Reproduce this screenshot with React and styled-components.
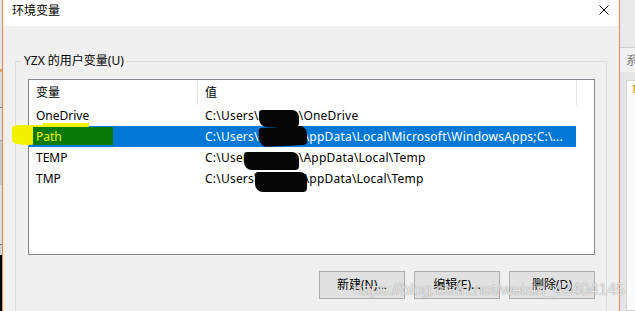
import React from 'react';
import styled, { createGlobalStyle } from 'styled-components';

const GlobalStyle = createGlobalStyle`
  html, body { margin: 0; padding: 0; background: #f0f0f0; overflow: hidden; }
  body {
    font-family: "Noto Sans", "Noto Sans CJK SC", sans-serif;
    font-size: 12px;
    color: #000;
  }
  * { box-sizing: border-box; }
`;

const Screen = styled.div`
  position: relative;
  display: flex;
  width: 635px;
  height: 311px;
  overflow: hidden;
`;

const LeftEdge = styled.div`
  width: 2px;
  flex: none;
  background: linear-gradient(
    to bottom,
    #e6e6e6 0, #e6e6e6 69px,
    #f0a060 69px, #f0a060 72px,
    #dedede 72px, #d8d8d8 107px,
    #8a8a8a 107px, #8a8a8a 108px,
    #e0e0e0 108px, #e0e0e0 140px,
    #9a9a9a 140px, #9a9a9a 141px,
    #c8c8c8 141px, #c8c8c8 185px,
    #e0e0e0 185px, #e0e0e0 244px,
    #777 244px, #777 245px,
    #d0d0d0 245px, #d0d0d0 255px,
    #000 255px
  );
`;

const Dialog = styled.div`
  width: 618px;
  flex: none;
  display: flex;
  flex-direction: column;
  border-left: 1px solid #ef8366;
  border-right: 1px solid #ef8366;
  background: #f0f0f0;
`;

const TitleBar = styled.div`
  height: 26px;
  flex: none;
  background: #fff;
  display: flex;
  justify-content: space-between;
  align-items: flex-start;
  padding: 0 10px 0 9px;
`;

const Title = styled.div`
  line-height: 22px;
  font-size: 12px;
`;

const CloseBox = styled.div`
  margin-top: 5px;
  width: 10px;
  height: 10px;
  display: flex;
`;

const Body = styled.div`
  flex: 1;
  min-height: 0;
  padding: 28px 12px 0;
`;

const GroupBox = styled.fieldset`
  margin: 0;
  padding: 0;
  border: 1px solid #dcdcdc;
  min-width: 0;
`;

const Legend = styled.legend`
  margin-left: 6px;
  padding: 0 2px;
  line-height: 14px;
  font-size: 12px;
`;

const GroupContent = styled.div`
  padding: 11px 11px 12px 12px;
`;

const ListView = styled.div`
  width: 567px;
  height: 176px;
  border: 1px solid #828790;
  background: #fff;
`;

const HeaderRow = styled.div`
  display: flex;
  height: 25px;
`;

const HeaderCell = styled.div`
  width: ${p => p.$w}px;
  flex: none;
  padding-left: 7px;
  line-height: 25px;
  border-right: 1px solid #e5e5e5;
`;

const Row = styled.div`
  display: flex;
  width: 547px;
  height: 21px;
  line-height: 21px;
  white-space: nowrap;
  background: ${p => (p.$selected ? '#0078d7' : 'transparent')};
  color: ${p => (p.$selected ? '#fff' : '#000')};
`;

const NameCell = styled.div`
  width: 169px;
  flex: none;
  padding-left: 7px;
`;

const ValueCell = styled.div`
  width: 378px;
  flex: none;
  padding-left: 7px;
  letter-spacing: 0.22px;
`;

const MarkedName = styled.span`
  position: relative;
  z-index: 2;
  color: #f2f200;
`;

const Redact = styled.span`
  display: inline-block;
  vertical-align: top;
  position: relative;
  z-index: 2;
  width: ${p => p.$w}px;
  height: ${p => p.$h}px;
  margin-left: ${p => p.$ml || 0}px;
  margin-right: ${p => p.$mr || 0}px;
  background: #050505;
  border-radius: 3px 7px 4px 8px;
  transform: translateY(${p => p.$dy || 0}px) rotate(${p => p.$rot || 0}deg);
`;

const ButtonRow = styled.div`
  display: flex;
  justify-content: flex-end;
  gap: 9px;
  margin-top: 16px;
`;

const Button = styled.button`
  width: 86px;
  height: 28px;
  padding: 0;
  border: 1px solid #adadad;
  background: #e1e1e1;
  font-family: "Noto Sans", "Noto Sans CJK SC", sans-serif;
  font-size: 12px;
  line-height: 26px;
  color: #000;
`;

const SideWindow = styled.div`
  flex: 1;
  display: flex;
  flex-direction: column;
  background: #f0f0f0;
  overflow: hidden;
  min-width: 0;
`;

const SideTop = styled.div`
  height: 48px;
  flex: none;
  background: #e9e9e9;
  border-bottom: 1px solid #cfcfcf;
`;

const SideLabel = styled.div`
  height: 24px;
  flex: none;
  padding: 2px 0 0 6px;
  line-height: 22px;
  color: #7a7a7a;
  white-space: nowrap;
  overflow: hidden;
`;

const SidePanel = styled.div`
  flex: 1;
  background: #e6e6e6;
  padding: 8px 0 0 6px;
`;

const SideBox = styled.div`
  height: 100%;
  background: #fbfbfb;
  border: 1px solid #d2d2d2;
  border-right: none;
  padding: 4px 0 0 6px;
`;

const SideIcon = styled.div`
  width: 8px;
  height: 8px;
  background: #f2c14e;
  border-top: 2px solid #d99a1e;
`;

const Annotation = styled.svg`
  position: absolute;
  left: 0;
  top: 118px;
  z-index: 1;
`;

const Watermark = styled.div`
  position: absolute;
  left: 353px;
  top: 280px;
  z-index: 3;
  font-family: "Liberation Sans", Arial, sans-serif;
  font-size: 16px;
  line-height: 20px;
  color: rgba(255, 255, 255, 0.78);
  text-shadow: 0 0 1px rgba(110, 110, 110, 0.9);
  white-space: nowrap;
`;

export default function App() {
  return (
    <>
      <GlobalStyle />
      <Screen>
        <LeftEdge />
        <Dialog>
          <TitleBar>
            <Title>环境变量</Title>
            <CloseBox>
              <svg width="10" height="10" viewBox="0 0 10 10">
                <path d="M0.5 0.5 L9.5 9.5 M9.5 0.5 L0.5 9.5" stroke="#000" strokeWidth="1" fill="none" />
              </svg>
            </CloseBox>
          </TitleBar>
          <Body>
            <GroupBox>
              <Legend>YZX 的用户变量(U)</Legend>
              <GroupContent>
                <ListView>
                  <HeaderRow>
                    <HeaderCell $w={169}>变量</HeaderCell>
                    <HeaderCell $w={379}>值</HeaderCell>
                  </HeaderRow>
                  <Row>
                    <NameCell>OneDrive</NameCell>
                    <ValueCell>
                      C:\Users\<Redact $w={40} $h={17} $dy={5} />\OneDrive
                    </ValueCell>
                  </Row>
                  <Row $selected>
                    <NameCell><MarkedName>Path</MarkedName></NameCell>
                    <ValueCell>
                      C:\Users\<Redact $w={48} $h={19} $dy={1} $mr={-10} $rot={-3} />\AppData\Local\Microsoft\WindowsApps;C:\...
                    </ValueCell>
                  </Row>
                  <Row>
                    <NameCell>TEMP</NameCell>
                    <ValueCell>
                      C:\Users\<Redact $w={55} $h={18} $dy={5} $ml={-15} />\AppData\Local\Temp
                    </ValueCell>
                  </Row>
                  <Row>
                    <NameCell>TMP</NameCell>
                    <ValueCell>
                      C:\Users\<Redact $w={52} $h={20} $dy={4} $ml={-4} $mr={-10} />\AppData\Local\Temp
                    </ValueCell>
                  </Row>
                </ListView>
                <ButtonRow>
                  <Button>新建(N)...</Button>
                  <Button>编辑(E)...</Button>
                  <Button>删除(D)</Button>
                </ButtonRow>
              </GroupContent>
            </GroupBox>
          </Body>
        </Dialog>
        <SideWindow>
          <SideTop />
          <SideLabel>系统属性</SideLabel>
          <SidePanel>
            <SideBox>
              <SideIcon />
            </SideBox>
          </SidePanel>
        </SideWindow>
        <Annotation width="120" height="32" viewBox="0 0 120 32">
          <path
            d="M12 9 Q14 7 20 7 L43 7 L43 5 L89 5 L89 9 L40 9 L36 26 Q28 28 18 26 Q12 26 12 20 Z"
            fill="#f2f200"
          />
          <rect x="33" y="9" width="80" height="18" fill="#097a05" />
        </Annotation>
        <Watermark>https://blog.csdn.net/weixin_42404145</Watermark>
      </Screen>
    </>
  );
}
